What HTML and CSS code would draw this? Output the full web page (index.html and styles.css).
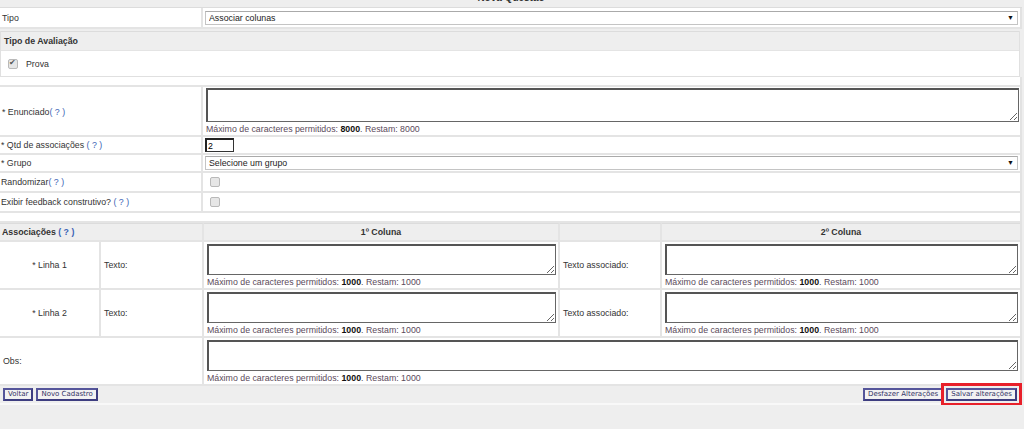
FILE: index.html
```html
<!DOCTYPE html>
<html lang="pt-BR">
  <head>
    <meta charset="UTF-8" />
    <meta name="viewport" content="width=device-width, initial-scale=1.0" />
    <title>Nova Questão</title>
    <link rel="stylesheet" href="styles.css">
  </head>
  <body>
    <div class="pagina">
      <div class="titulo"><span>Nova Questão</span></div>

      <table class="form">
        <tr class="topo">
          <td class="rot">Tipo</td>
          <td>
            <div class="combo">
              <select><option>Associar colunas</option></select>
              <span class="seta">▼</span>
            </div>
          </td>
        </tr>
      </table>

      <div class="secao">
        <div class="secao-tit">Tipo de Avaliação</div>
        <div class="secao-corpo">
          <label class="opcao"><input type="checkbox" checked disabled> Prova</label>
        </div>
      </div>

      <table class="form">
        <tr class="vazio"><td colspan="2"></td></tr>
        <tr class="alto">
          <td class="rot">* Enunciado<a href="#" class="ajuda">( ? )</a></td>
          <td>
            <textarea class="txt-enunciado"></textarea>
            <div class="limite">Máximo de caracteres permitidos: <b>8000</b>. Restam: 8000</div>
          </td>
        </tr>
        <tr>
          <td class="rot">* Qtd de associações <a href="#" class="ajuda">( ? )</a></td>
          <td><input type="text" class="qtd" value="2"></td>
        </tr>
        <tr>
          <td class="rot">* Grupo</td>
          <td>
            <div class="combo">
              <select><option>Selecione um grupo</option></select>
              <span class="seta">▼</span>
            </div>
          </td>
        </tr>
        <tr class="check">
          <td class="rot">Randomizar<a href="#" class="ajuda">( ? )</a></td>
          <td><input type="checkbox" disabled></td>
        </tr>
        <tr class="check">
          <td class="rot">Exibir feedback construtivo? <a href="#" class="ajuda">( ? )</a></td>
          <td><input type="checkbox" disabled></td>
        </tr>
        <tr class="vazio"><td colspan="2"></td></tr>
      </table>

      <table class="assoc">
        <colgroup>
          <col class="c-linha">
          <col class="c-rot">
          <col class="c-campo">
          <col class="c-rot2">
          <col>
        </colgroup>
        <tr class="cab">
          <td colspan="2" class="esq">Associações <a href="#" class="ajuda">( ? )</a></td>
          <td>1º Coluna</td>
          <td></td>
          <td>2º Coluna</td>
        </tr>
        <tr>
          <td class="linha">* Linha 1</td>
          <td>Texto:</td>
          <td class="campo">
            <textarea></textarea>
            <div class="limite">Máximo de caracteres permitidos: <b>1000</b>. Restam: 1000</div>
          </td>
          <td>Texto associado:</td>
          <td class="campo">
            <textarea></textarea>
            <div class="limite">Máximo de caracteres permitidos: <b>1000</b>. Restam: 1000</div>
          </td>
        </tr>
        <tr>
          <td class="linha">* Linha 2</td>
          <td>Texto:</td>
          <td class="campo">
            <textarea></textarea>
            <div class="limite">Máximo de caracteres permitidos: <b>1000</b>. Restam: 1000</div>
          </td>
          <td>Texto associado:</td>
          <td class="campo">
            <textarea></textarea>
            <div class="limite">Máximo de caracteres permitidos: <b>1000</b>. Restam: 1000</div>
          </td>
        </tr>
        <tr>
          <td colspan="2">Obs:</td>
          <td colspan="3" class="campo">
            <textarea></textarea>
            <div class="limite">Máximo de caracteres permitidos: <b>1000</b>. Restam: 1000</div>
          </td>
        </tr>
      </table>

      <div class="botoes">
        <div class="grupo">
          <button>Voltar</button>
          <button>Novo Cadastro</button>
        </div>
        <div class="grupo">
          <button>Desfazer Alterações</button>
          <button class="destaque">Salvar alterações</button>
        </div>
      </div>
    </div>
  </body>
</html>
```

FILE: styles.css
```css
body {
  margin: 0;
  background-color: #eeeeee;
  font-family: 'Liberation Sans', Arial, sans-serif;
  font-size: 8.8px;
  color: #333;
}
.pagina {
  width: 1022px;
}
.titulo {
  height: 7px;
  overflow: hidden;
  text-align: center;
  font-weight: bold;
  font-size: 10px;
  background-color: #eeeeee;
  border-bottom: 1px solid #dcdcdc;
}
.titulo span {
  display: block;
  margin-top: -8px;
  line-height: 12px;
}
a.ajuda {
  color: #3a63b5;
  text-decoration: none;
}
table.form {
  width: 1022px;
  border-spacing: 0;
  background-color: #fff;
  border-right: 2px solid #e2e2e2;
}
table.form td {
  padding: 1px 2px;
  border-bottom: 2px solid #e4e4e4;
  height: 14px;
}
table.form tr.topo td {
  padding: 2px 2px;
  height: 15px;
}
table.form td.rot {
  width: 197px;
  padding-left: 1px;
  border-right: 2px solid #e4e4e4;
}
table.form tr.alto td {
  padding: 1px 2px 0;
}
table.form tr.vazio td {
  height: 8px;
  padding: 0;
}
table.form tr.check td {
  height: 16px;
}
.combo {
  position: relative;
}
select {
  appearance: none;
  display: block;
  width: 100%;
  height: 14px;
  font-family: inherit;
  font-size: 8.8px;
  color: #222;
  background-color: #fff;
  border: 1px solid #c4c4c4;
  border-top-color: #aaa;
  padding: 0 3px;
  margin: 0;
}
.combo .seta {
  position: absolute;
  right: 4px;
  top: 3px;
  font-size: 7px;
  color: #111;
}
.secao {
  margin: 2px 2px 0 0;
  border: 1px solid #e0e0e0;
  border-top: none;
  background-color: #fff;
}
.secao-tit {
  background-color: #eeeeee;
  font-weight: bold;
  padding: 0 3px;
  height: 18px;
  line-height: 18px;
  border-top: 1px solid #dcdcdc;
  border-bottom: 1px solid #e4e4e4;
}
.secao-corpo {
  height: 25px;
  display: flex;
  align-items: center;
  padding-left: 7px;
}
.opcao {
  display: flex;
  align-items: center;
  gap: 6px;
}
input[type="checkbox"] {
  appearance: none;
  position: relative;
  box-sizing: border-box;
  width: 10px;
  height: 10px;
  margin: 0 0 0 5px;
  vertical-align: middle;
  border: 1px solid #b9b9b9;
  border-radius: 2px;
  background-color: #e6e6e6;
}
input[type="checkbox"]:checked::after {
  content: "✔";
  position: absolute;
  left: 0;
  top: -2px;
  font-size: 8px;
  color: #555;
}
.opcao input[type="checkbox"] {
  margin: 0 2px 0 0;
}
textarea {
  display: block;
  box-sizing: border-box;
  width: 100%;
  height: 31px;
  margin: 0 0 0 1px;
  border: 1px solid #666;
  border-top: 2px solid #555;
  border-left: 2px solid #555;
  resize: both;
  font-family: inherit;
}
.txt-enunciado {
  height: 34px;
}
.limite {
  color: #5b4b5b;
  padding: 2px 0 1px 1px;
  line-height: 10px;
}
.limite b {
  color: #111;
}
input.qtd {
  box-sizing: border-box;
  width: 29px;
  height: 14px;
  margin: 0;
  padding: 0 1px;
  border: 1px solid #333;
  border-top: 2px solid #222;
  border-left: 2px solid #222;
  font-family: inherit;
  font-size: 8.8px;
}
table.assoc {
  width: 1022px;
  table-layout: fixed;
  border-spacing: 0;
  background-color: #fff;
  border-right: 2px solid #e2e2e2;
}
col.c-linha { width: 101px; }
col.c-rot { width: 103px; }
col.c-campo { width: 356px; }
col.c-rot2 { width: 102px; }
table.assoc td {
  padding: 2px 3px;
  border-bottom: 2px solid #e4e4e4;
  border-right: 2px solid #e4e4e4;
}
table.assoc td:last-child {
  border-right: none;
}
table.assoc tr.cab td {
  background-color: #eeeeee;
  font-weight: bold;
  text-align: center;
  height: 12px;
  border-top: 1px solid #dcdcdc;
}
table.assoc tr.cab td.esq {
  text-align: left;
  padding-left: 2px;
}
table.assoc td.linha {
  text-align: center;
}
table.assoc td.campo {
  padding: 2px 3px 0 2px;
}
.botoes {
  display: flex;
  justify-content: space-between;
  align-items: center;
  height: 17px;
  padding: 0 5px 0 3px;
  background-color: #eeeeee;
  border-bottom: 2px solid #f8f8f8;
}
.grupo {
  display: flex;
  gap: 3px;
}
button {
  font-family: 'DejaVu Sans', Verdana, sans-serif;
  font-size: 7px;
  color: #333366;
  background-color: #f2f2f2;
  border: 2px solid #55559a;
  border-right-color: #3d3d80;
  border-bottom-color: #3d3d80;
  padding: 0 3px;
  height: 13px;
  line-height: 9px;
  cursor: pointer;
}
button.destaque {
  outline: 3px solid #e8202a;
  outline-offset: 2px;
}
```
